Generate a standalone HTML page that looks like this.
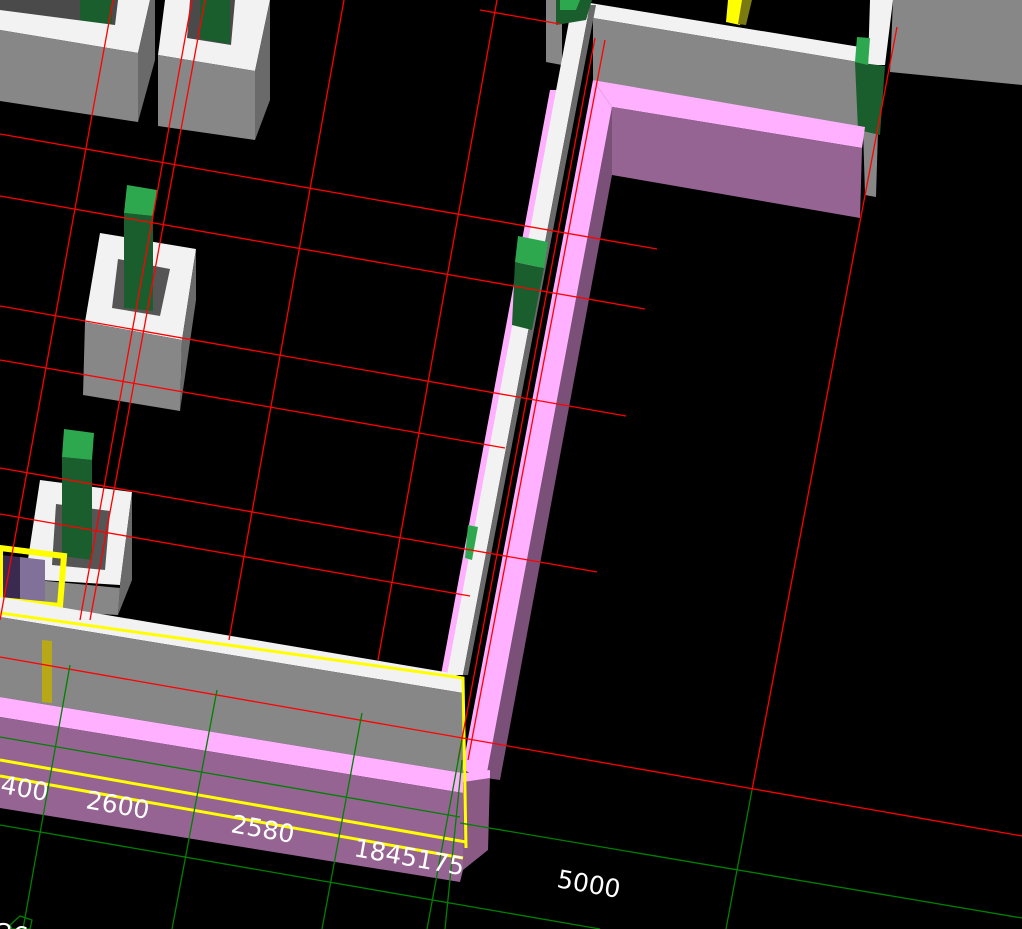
<!DOCTYPE html>
<html><head><meta charset="utf-8"><style>
html,body{margin:0;padding:0;background:#000;width:1022px;height:929px;overflow:hidden}
svg{display:block}
text{font-family:"DejaVu Sans","Liberation Sans",sans-serif;fill:#fff;font-size:25px}
</style></head><body>
<svg width="1022" height="929" viewBox="0 0 1022 929" xmlns="http://www.w3.org/2000/svg">
<rect width="1022" height="929" fill="#000"/>
<polygon points="893,0 1022,0 1022,85 890,72" fill="#878787"/>
<polygon points="863,128 878,130 876,197 865,195" fill="#878787"/>
<polygon points="0,0 118,0 115,25 0,14" fill="#4a4a4a"/>
<polygon points="80,0 112,0 112,25 80,22" fill="#1b5e2e"/>
<polygon points="118,0 150,0 138,53 0,30 0,10 115,25" fill="#f2f2f2"/>
<polygon points="0,30 138,53 138,122 0,101" fill="#878787"/>
<polygon points="138,53 150,0 155,0 155,60 138,122" fill="#6a6a6a"/>
<polygon points="165,0 270,0 255,71 158,55" fill="#f2f2f2"/>
<polygon points="190,0 235,0 231,45 187,38" fill="#4a4a4a"/>
<polygon points="200,0 230,0 230,44 200,39" fill="#1b5e2e"/>
<polygon points="158,55 255,71 255,140 158,126" fill="#878787"/>
<polygon points="255,71 270,0 270,100 255,140" fill="#6a6a6a"/>
<polygon points="100,233 196,249 182,340 85,322" fill="#f2f2f2"/>
<polygon points="118,259 170,269 160,316 112,308" fill="#555"/>
<polygon points="124,213 153,216 153,311 124,308" fill="#1b5e2e"/>
<polygon points="127,185 157,190 153,216 124,213" fill="#2ea84f"/>
<polygon points="85,322 182,340 180,411 83,395" fill="#878787"/>
<polygon points="182,340 196,249 196,300 180,411" fill="#6a6a6a"/>
<polygon points="40,480 132,492 120,585 25,579" fill="#f2f2f2"/>
<polygon points="56,504 110,511 105,570 52,565" fill="#555"/>
<polygon points="62,457 92,460 92,560 62,556" fill="#1b5e2e"/>
<polygon points="64,429 94,433 92,460 62,457" fill="#2ea84f"/>
<polygon points="25,579 120,588 118,615 25,610" fill="#878787"/>
<polygon points="120,585 132,492 132,580 118,615" fill="#6a6a6a"/>
<polygon points="0,555 20,557 20,600 0,598" fill="#3a2a50"/>
<polygon points="20,557 45,560 45,602 20,600" fill="#80709a"/>
<polygon points="0,548 64,556 60,606 0,600" fill="none" stroke="#ffff00" stroke-width="6"/>
<polygon points="728,0 748,0 740,25 726,22" fill="#ffff00"/>
<polygon points="742,0 752,0 746,25 738,24" fill="#7a7a10"/>
<polygon points="546,0 562,0 562,65 546,62" fill="#878787"/>
<polygon points="590,3 860,47 858,62 593,18" fill="#f2f2f2"/>
<polygon points="593,18 858,62 865,128 593,80" fill="#878787"/>
<polygon points="870,0 893,0 885,65 868,65" fill="#f2f2f2"/>
<polygon points="855,62 885,66 880,135 858,130" fill="#1b5e2e"/>
<polygon points="857,37 870,38 868,65 855,62" fill="#2ea84f"/>
<polygon points="593,80 865,127 862,148 612,107" fill="#ffb0ff"/>
<polygon points="612,107 862,148 860,218 612,175" fill="#956493"/>
<polygon points="612,107 612,175 500,780 486,778" fill="#7a4f78"/>
<polygon points="593,80 612,107 486,778 462,770" fill="#ffb0ff"/>
<polygon points="550,90 564,90 450,680 440,680" fill="#ffb0ff"/>
<polygon points="572,5 590,5 463,675 447,675" fill="#f2f2f2"/>
<polygon points="590,5 596,5 468,675 463,675" fill="#6a6a6a"/>
<polygon points="556,0 592,0 586,20 556,25" fill="#1b5e2e"/>
<polygon points="560,0 580,0 576,10 560,10" fill="#2ea84f"/>
<polygon points="515,262 544,268 532,330 512,325" fill="#1b5e2e"/>
<polygon points="518,236 548,242 544,268 515,262" fill="#2ea84f"/>
<polygon points="468,525 478,527 472,560 465,558" fill="#2ea84f"/>
<polygon points="0,597 445,672 463,677 463,693 0,617" fill="#f2f2f2"/>
<polygon points="0,617 463,693 463,773 0,697" fill="#878787"/>
<polygon points="42,640 52,641 52,703 42,702" fill="#b8a818"/>
<polygon points="0,697 463,773 463,793 0,717" fill="#ffb0ff"/>
<polygon points="0,717 463,793 463,870 460,882 0,808" fill="#956493"/>
<polygon points="463,780 490,776 488,850 463,870" fill="#8a5a85"/>
<polygon points="463,773 490,770 490,778 463,782" fill="#ffb0ff"/>
<polyline points="0,613 463,678 466,848" fill="none" stroke="#ffff00" stroke-width="3"/>
<line x1="0" y1="760" x2="466" y2="842" stroke="#ffff00" stroke-width="3"/>
<line x1="0" y1="776" x2="463" y2="858" stroke="#ffff00" stroke-width="3"/>
<g stroke="#ff0000" stroke-width="1.3" fill="none">
<line x1="0" y1="134" x2="657" y2="249"/>
<line x1="0" y1="196" x2="645" y2="309"/>
<line x1="0" y1="306" x2="626" y2="416"/>
<line x1="0" y1="360" x2="505" y2="448"/>
<line x1="0" y1="468" x2="597" y2="572"/>
<line x1="0" y1="514" x2="470" y2="596"/>
<line x1="0" y1="657" x2="1022" y2="836"/>
<line x1="480" y1="10" x2="560" y2="24"/>
<line x1="113" y1="0" x2="0" y2="620"/>
<line x1="192" y1="0" x2="80" y2="620"/>
<line x1="205" y1="0" x2="90" y2="620"/>
<line x1="344" y1="0" x2="229" y2="640"/>
<line x1="497" y1="0" x2="378" y2="660"/>
<line x1="897" y1="27" x2="752" y2="790"/>
<line x1="595" y1="38" x2="458" y2="760"/>
<line x1="605" y1="40" x2="468" y2="760"/>
</g>
<g stroke="#008000" stroke-width="1.3" fill="none">
<line x1="0" y1="737" x2="460" y2="817"/>
<line x1="460" y1="823" x2="1022" y2="918"/>
<line x1="0" y1="825" x2="600" y2="929"/>
<line x1="70" y1="665" x2="23" y2="929"/>
<line x1="217" y1="690" x2="172" y2="929"/>
<line x1="362" y1="713" x2="322" y2="929"/>
<line x1="462" y1="740" x2="427" y2="929"/>
<line x1="462" y1="760" x2="445" y2="929"/>
<line x1="752" y1="790" x2="726" y2="929"/>
<polygon points="10,925 20,916 32,920 30,929 12,929"/>
</g>
<g>
<text transform="translate(-16,790) rotate(10)">2400</text>
<text transform="translate(85,808) rotate(10)">2600</text>
<text transform="translate(230,832) rotate(10)">2580</text>
<text transform="translate(353,856) rotate(10)">1845175</text>
<text transform="translate(556,887) rotate(10)">5000</text>
<text transform="translate(-5,940) rotate(10)">26.27</text>
</g>
</svg>
</body></html>
